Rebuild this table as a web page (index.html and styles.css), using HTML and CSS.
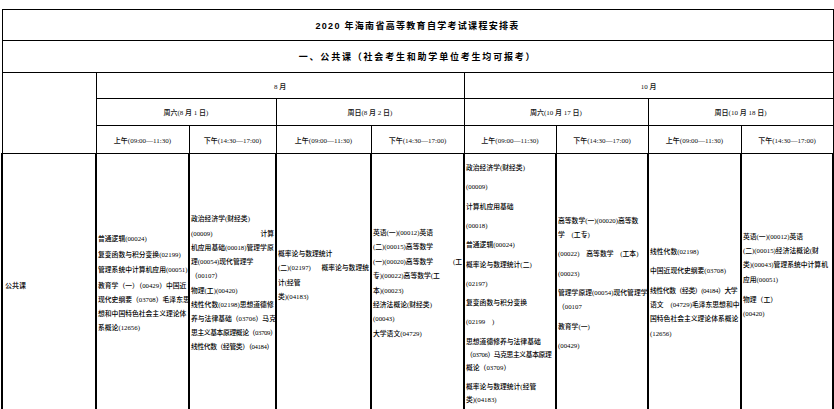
FILE: index.html
```html
<!DOCTYPE html>
<html lang="zh-CN">
<head>
<meta charset="utf-8">
<title>2020年海南省高等教育自学考试课程安排表</title>
<link rel="stylesheet" href="styles.css">
</head>
<body>
<div class="page">
<table class="sched">
  <colgroup>
    <col class="w94"><col class="w93"><col class="w87"><col class="w95"><col class="w93">
    <col class="w92"><col class="w92"><col class="w93"><col class="w92">
  </colgroup>
  <tr class="r-title"><td colspan="9" class="title">2020 年海南省高等教育自学考试课程安排表</td></tr>
  <tr class="r-sub"><td colspan="9" class="subtitle">一、公共课（社会考生和助学单位考生均可报考）</td></tr>
  <tr class="r-month">
    <td rowspan="3"></td>
    <td colspan="4" class="hd">8 月</td>
    <td colspan="4" class="hd">10 月</td>
  </tr>
  <tr class="r-day">
    <td colspan="2" class="hd">周六(8 月 1 日)</td>
    <td colspan="2" class="hd">周日(8 月 2 日)</td>
    <td colspan="2" class="hd">周六(10 月 17 日)</td>
    <td colspan="2" class="hd">周日(10 月 18 日)</td>
  </tr>
  <tr class="r-time">
    <td class="hd">上午(09:00—11:30)</td>
    <td class="hd">下午(14:30—17:00)</td>
    <td class="hd">上午(09:00—11:30)</td>
    <td class="hd">下午(14:30—17:00)</td>
    <td class="hd">上午(09:00—11:30)</td>
    <td class="hd">下午(14:30—17:00)</td>
    <td class="hd">上午(09:00—11:30)</td>
    <td class="hd">下午(14:30—17:00)</td>
  </tr>
  <tr class="r-body">
    <td class="cat">公共课</td>
    <td class="cell c2">
      <p>普通逻辑(00024)</p>
      <p>复变函数与积分变换(02199)</p>
      <p>管理系统中计算机应用(00051)</p>
      <p><span class="ln">教育学（一）（00429）中国近</span><span class="ln">现代史纲要（03708）毛泽东思</span><span class="ln">想和中国特色社会主义理论体</span><span class="ln">系概论(12656)</span></p>
    </td>
    <td class="cell c3">
      <p><span class="ln">政治经济学(财经类)</span><span class="ln sb"><span>(00009)</span><span>计算</span></span><span class="ln">机应用基础(00018)管理学原</span><span class="ln">理(00054)现代管理学</span><span class="ln">（00107）</span><span class="ln">物理(工)(00420)</span><span class="ln">线性代数(02198)思想道德修</span><span class="ln">养与法律基础（03706）马克</span><span class="ln tight">思主义基本原理概论（03709）</span><span class="ln tight">线性代数（经管类）（04184）</span></p>
    </td>
    <td class="cell c4">
      <p><span class="ln">概率论与数理统计</span><span class="ln sb"><span>(二)(02197)</span><span>概率论与数理统</span></span><span class="ln">计(经管</span><span class="ln">类)(04183)</span></p>
    </td>
    <td class="cell c5">
      <p><span class="ln">英语(一)(00012)英语</span><span class="ln">(二)(00015)高等数学</span><span class="ln sb"><span>(一)(00020)高等数学</span><span>(工</span></span><span class="ln">专)(00022)高等数学(工</span><span class="ln">本)(00023)</span><span class="ln">经济法概论(财经类)</span><span class="ln">(00043)</span><span class="ln">大学语文(04729)</span></p>
    </td>
    <td class="cell c6">
      <p>政治经济学(财经类)</p>
      <p>(00009)</p>
      <p>计算机应用基础</p>
      <p>(00018)</p>
      <p>普通逻辑(00024)</p>
      <p>概率论与数理统计(二)</p>
      <p>(02197)</p>
      <p>复变函数与积分变换</p>
      <p>(02199　)</p>
      <p><span class="ln">思想道德修养与法律基础</span><span class="ln tight">（03706）马克思主义基本原理</span><span class="ln">概论（03709）</span></p>
      <p><span class="ln">概率论与数理统计(经管</span><span class="ln">类)(04183)</span></p>
    </td>
    <td class="cell c7">
      <p><span class="ln">高等数学(一)(00020)高等数</span><span class="ln">学　(工专)</span></p>
      <p>(00022)　高等数学　(工本)</p>
      <p>(00023)</p>
      <p><span class="ln">管理学原理(00054)现代管理学</span><span class="ln">（00107</span></p>
      <p>教育学(一)</p>
      <p>(00429)</p>
    </td>
    <td class="cell c8">
      <p>线性代数(02198)</p>
      <p>中国近现代史纲要(03708)</p>
      <p><span class="ln tight">线性代数（经类）(04184）大学</span><span class="ln">语文　(04729)毛泽东思想和中</span><span class="ln">国特色社会主义理论体系概论</span><span class="ln">(12656)</span></p>
    </td>
    <td class="cell c9">
      <p><span class="ln">英语(一)(00012)英语</span><span class="ln">(二)(00015)经济法概论(财</span><span class="ln">类)(00043)管理系统中计算机</span><span class="ln">应用(00051)</span></p>
      <p><span class="ln">物理（工）</span><span class="ln">(00420)</span></p>
    </td>
  </tr>
</table>
</div>
</body>
</html>
```

FILE: styles.css
```css
html, body {
  margin: 0;
  padding: 0;
  background: #fff;
}

body {
  font-family: "Liberation Serif", "Noto Sans CJK SC", serif;
  color: #000;
  font-size: 6.8px;
  font-weight: 500;
}

.page {
  padding: 9px 0 0 1px;
  overflow: hidden;
  height: 400px;
}

.sched {
  border-collapse: collapse;
  table-layout: fixed;
  width: 831px;
}

.sched td {
  border: 1px solid #000;
  padding: 0;
  overflow: hidden;
  vertical-align: middle;
}

.w94 { width: 94px; }
.w93 { width: 93px; }
.w87 { width: 87px; }
.w95 { width: 95px; }
.w92 { width: 92px; }

.r-title td { height: 30px; }
.r-sub td { height: 31px; }
.r-month td { height: 25px; }
.r-day td { height: 26px; }
.r-time td { height: 27px; }
.r-body td {
  height: 240px;
  border-left-width: 2px;
  border-right-width: 2px;
}

.title {
  text-align: center;
  font-family: "Liberation Sans", "Noto Sans CJK SC", sans-serif;
  font-weight: 700;
  font-size: 9px;
  letter-spacing: 1.3px;
}

.subtitle {
  text-align: center;
  font-family: "Noto Sans CJK SC", sans-serif;
  font-weight: 700;
  font-size: 9px;
  letter-spacing: 1.8px;
}

.hd {
  text-align: center;
  font-size: 7px;
  color: #111;
}

.cat {
  padding-left: 2px !important;
  padding-top: 2px !important;
  font-size: 7px;
}

.cell {
  padding: 0 1px !important;
}

.cell p {
  margin: 0;
  line-height: 14px;
  white-space: nowrap;
}

.ln {
  display: block;
  white-space: nowrap;
}

.tight { letter-spacing: -0.4px; }

.sb {
  display: flex;
  justify-content: space-between;
}

.c2 p { line-height: 14px; margin-bottom: 1.5px; }
.c3 p { line-height: 14.2px; }
.c4 { padding-bottom: 16px !important; }
.c4 p { line-height: 14.3px; }
.c5 p { line-height: 14.4px; }
.c6 p { line-height: 13px; margin-bottom: 6.3px; }
.c7 p { line-height: 14px; margin-bottom: 5.5px; }
.c8 { padding-top: 19px !important; }
.c8 p { line-height: 14.3px; margin-bottom: 5px; }
.c9 { padding-bottom: 16px !important; }
.c9 p { line-height: 14.2px; margin-bottom: 6px; }
.cell p:last-child { margin-bottom: 0; }
```
